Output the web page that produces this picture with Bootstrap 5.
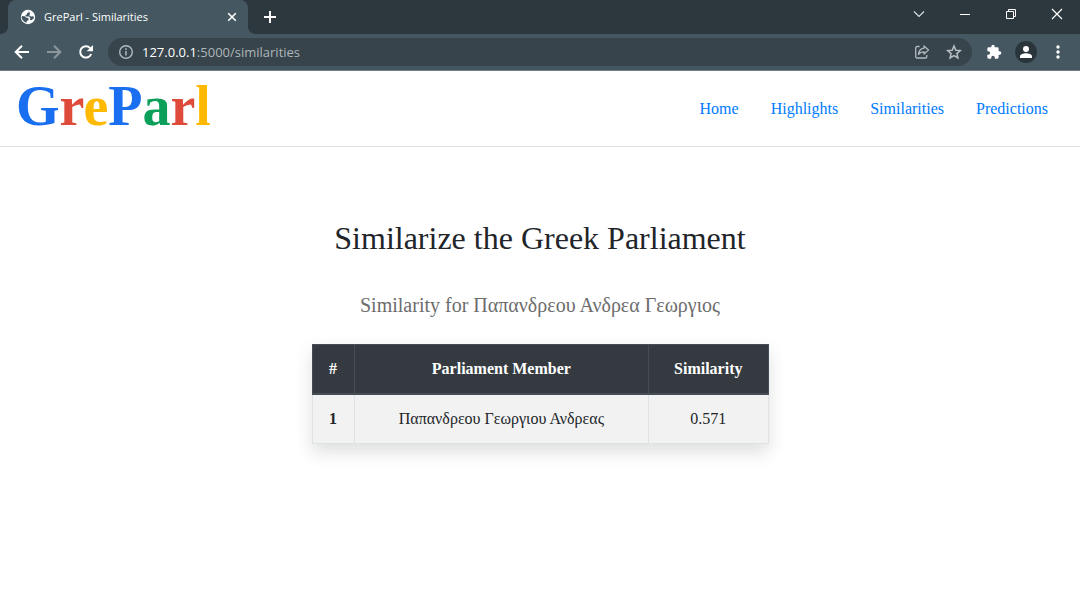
<!DOCTYPE html>
<html lang="en">
<head>
<meta charset="utf-8">
<meta name="viewport" content="width=device-width, initial-scale=1">
<title>GreParl - Similarities</title>
<link href="https://cdn.jsdelivr.net/npm/bootstrap@5.3.0/dist/css/bootstrap.min.css" rel="stylesheet">
<style>
  body { font-family: "Liberation Serif", "Times New Roman", serif; color: #212529; background: #fff; }
  button { appearance: none; border: 0; background: none; padding: 0; color: inherit; }
  svg { display: block; }

  /* browser frame */
  .chrome { font-family: "Open Sans", "Segoe UI", sans-serif; color: #fff; }
  .tab-strip { height: 34px; background: #2d383e; padding-left: 8px; }
  .browser-tab { width: 240px; height: 34px; background: #455861; border-radius: 8px 8px 0 0; padding: 0 10px 0 12px; position: relative; }
  .browser-tab::before, .browser-tab::after { content: ""; position: absolute; bottom: 0; width: 8px; height: 8px; }
  .browser-tab::before { left: -8px; background: radial-gradient(circle at 0 0, #2d383e 8px, #455861 8px); }
  .browser-tab::after { right: -8px; background: radial-gradient(circle at 100% 0, #2d383e 8px, #455861 8px); }
  .tab-title { font-size: 11px; line-height: 16px; margin-left: 8px; }
  .new-tab { margin-left: 14px; }
  .win-btn { width: 46px; height: 28px; display: flex; align-items: center; justify-content: center; }
  .toolbar { height: 37px; background: #455861; border-bottom: 1px solid #707c86; padding: 0 14px; }
  .omnibox { height: 28px; border-radius: 14px; background: #37444b; margin: 0 14px; padding: 0 10px; color: #aeb6ba; }
  .address { font-size: 13px; line-height: 20px; height: 20px; margin-left: 8px; }
  .address b { font-weight: 400; color: #fff; }
  .browser-actions { gap: 13px; }
  .avatar { width: 22px; height: 22px; background: #2a353b; }

  /* site */
  .site-header { border-bottom: 1px solid #dee2e6; padding: 0 16px; height: 76px; }
  .brand { font-size: 56px; line-height: 70px; font-weight: 700; text-decoration: none; color: #1a6ff0; }
  .g-red { color: #de4b3a; } .g-yellow { color: #ffb900; } .g-green { color: #0c9f5a; }
  .site-header .nav-link { color: #007bff; line-height: 24px; padding: 8px 16px; }
  .page-title { font-size: 32px; line-height: 38px; margin: 72px 0 0; }
  .page-sub { font-size: 20px; line-height: 24px; color: #6c6c6c; margin: 36px 0 27px; }
  .result-table { max-width: 457px; border-collapse: collapse; text-align: center; line-height: 24px; margin: 0 auto; }
  .result-table th, .result-table td { padding: 12px; border: 1px solid #dee2e6; }
  .result-table thead th { background: #343a40; color: #fff; border-color: #454d55; border-bottom-width: 2px; }
  .result-table tbody tr { background: #f2f2f2; }
</style>
</head>
<body>
<div class="chrome">
  <div class="tab-strip d-flex align-items-start">
    <div class="browser-tab d-flex align-items-center">
      <svg width="16" height="16" viewBox="0 0 16 16"><circle cx="8" cy="8" r="7.2" fill="#fff"/><path d="M2 7l2.800.2 1.800 1.600 1.800.3.300 1.800-1.900 1-.3 1.900C4 13 2 11 1.600 8.600zM9 1.800L8.600 3.400 7 4.300 6.900 5.600 5.300 6.200 6 7.400 9.200 7.600l1 1.700-.2 1.600 1.700.300 2.300-2.200-.5-1.700-2.600.100-1.700-1.200.9-1.700-.8-1.300z" fill="#455861"/></svg>
      <span class="tab-title">GreParl - Similarities</span>
      <button class="ms-auto" type="button" aria-label="Close tab"><svg width="12" height="12" viewBox="0 0 12 12" stroke="#fff" stroke-width="1.600"><path d="M2.200 2.200l7.600 7.600M9.800 2.200L2.200 9.800"/></svg></button>
    </div>
    <button class="new-tab h-100" type="button" aria-label="New tab"><svg width="16" height="16" viewBox="0 0 16 16" stroke="#fff" stroke-width="2"><path d="M8 2v12M2 8h12"/></svg></button>
    <div class="d-flex ms-auto">
      <button class="win-btn" type="button" aria-label="Search tabs"><svg width="12" height="12" viewBox="0 0 12 12" fill="none" stroke="#d8dcde" stroke-width="1.200"><path d="M1 3.500l5 5 5-5"/></svg></button>
      <button class="win-btn" type="button" aria-label="Minimize"><svg width="12" height="12" viewBox="0 0 12 12" stroke="#fff"><path d="M1 6.500h10"/></svg></button>
      <button class="win-btn" type="button" aria-label="Restore"><svg width="12" height="12" viewBox="0 0 12 12" fill="none" stroke="#fff"><path d="M1.500 3.500h7v7h-7zM3.500 3.500v-2h7v7h-2"/></svg></button>
      <button class="win-btn" type="button" aria-label="Close"><svg width="12" height="12" viewBox="0 0 12 12" stroke="#fff" stroke-width="1.200"><path d="M1 1l10 10M11 1L1 11"/></svg></button>
    </div>
  </div>
  <div class="toolbar d-flex align-items-center">
    <div class="d-flex gap-3">
      <button type="button" aria-label="Back"><svg width="16" height="16" viewBox="0 0 16 16" fill="none" stroke="#fff" stroke-width="2"><path d="M15 8H2.500M8 1.700L1.700 8 8 14.300"/></svg></button>
      <button type="button" aria-label="Forward"><svg width="16" height="16" viewBox="0 0 16 16" fill="none" stroke="#8c979c" stroke-width="2"><path d="M1 8h12.500M8 1.700L14.300 8 8 14.300"/></svg></button>
      <button type="button" aria-label="Reload"><svg width="16" height="16" viewBox="0 0 16 16"><path d="M13.200 10A5.700 5.700 0 1 1 12 3.900L13.300 5.200" fill="none" stroke="#fff" stroke-width="2"/><path d="M15 1v6.300H8.700z" fill="#fff"/></svg></button>
    </div>
    <div class="omnibox d-flex align-items-center flex-grow-1">
      <svg width="16" height="16" viewBox="0 0 16 16"><circle cx="8" cy="8" r="6.300" fill="none" stroke="#b3babe" stroke-width="1.400"/><path d="M8 7v4.500M8 4.300v1.600" stroke="#b3babe" stroke-width="1.500"/></svg>
      <div class="address"><b>127.0.0.1</b>:5000/similarities</div>
      <div class="d-flex gap-3 ms-auto">
        <button type="button" aria-label="Share"><svg width="16" height="16" viewBox="0 0 16 16" fill="none" stroke="#b3babe" stroke-width="1.300" stroke-linejoin="round"><path d="M5.500 2.500H3a1.300 1.300 0 0 0-1.300 1.300v8.900A1.300 1.300 0 0 0 3 14h8.500a1.300 1.300 0 0 0 1.300-1.300V11"/><path d="M10 2l4.500 4-4.500 4V7.900C7.500 7.900 5.700 8.800 4.500 10.500 4.800 7 6.800 4.600 10 4.200z"/></svg></button>
        <button type="button" aria-label="Bookmark"><svg width="16" height="16" viewBox="0 0 16 16" fill="none" stroke="#bac0c3" stroke-width="1.500"><path d="M8 2l1.800 4.200 4.500.4-3.400 3 1 4.400L8 11.700 4.100 14l1-4.400-3.400-3 4.500-.4z"/></svg></button>
      </div>
    </div>
    <div class="browser-actions d-flex align-items-center">
      <button type="button" aria-label="Extensions"><svg width="16" height="16" viewBox="0 0 24 24" fill="#fff"><path d="M20.500 11H19V7a2 2 0 0 0-2-2h-4V3.500a2.500 2.500 0 0 0-5 0V5H4a2 2 0 0 0-2 2v3.800h1.500a2.700 2.700 0 0 1 0 5.400H2V20a2 2 0 0 0 2 2h3.800v-1.500a2.700 2.700 0 0 1 5.400 0V22H17a2 2 0 0 0 2-2v-4h1.500a2.500 2.500 0 0 0 0-5z"/></svg></button>
      <button class="avatar rounded-circle d-flex align-items-center justify-content-center" type="button" aria-label="Profile"><svg width="14" height="14" viewBox="0 0 14 14" fill="#fff"><circle cx="7" cy="4" r="3"/><path d="M1 13v-1.700C1 9.300 4.500 8.300 7 8.300s6 1 6 3V13z"/></svg></button>
      <button type="button" aria-label="Menu"><svg width="16" height="16" viewBox="0 0 16 16" fill="#fff"><circle cx="8" cy="3" r="1.700"/><circle cx="8" cy="8" r="1.700"/><circle cx="8" cy="13" r="1.700"/></svg></button>
    </div>
  </div>
</div>

<header class="site-header d-flex align-items-center justify-content-between">
  <a class="brand align-self-start" href="#">G<span class="g-red">r</span><span class="g-yellow">e</span>P<span class="g-green">a</span><span class="g-red">r</span><span class="g-yellow">l</span></a>
  <nav class="nav">
    <a class="nav-link" href="#">Home</a>
    <a class="nav-link" href="#">Highlights</a>
    <a class="nav-link" href="#">Similarities</a>
    <a class="nav-link" href="#">Predictions</a>
  </nav>
</header>

<main class="container text-center pb-5">
  <h1 class="page-title fw-normal">Similarize the Greek Parliament</h1>
  <p class="page-sub">Similarity for Παπανδρεου Ανδρεα Γεωργιος</p>
  <table class="result-table w-100 shadow">
    <thead>
      <tr><th scope="col">#</th><th scope="col">Parliament Member</th><th scope="col">Similarity</th></tr>
    </thead>
    <tbody>
      <tr><th scope="row">1</th><td>Παπανδρεου Γεωργιου Ανδρεας</td><td>0.571</td></tr>
    </tbody>
  </table>
</main>
<script src="https://cdn.jsdelivr.net/npm/bootstrap@5.3.0/dist/js/bootstrap.bundle.min.js"></script>
</body>
</html>
